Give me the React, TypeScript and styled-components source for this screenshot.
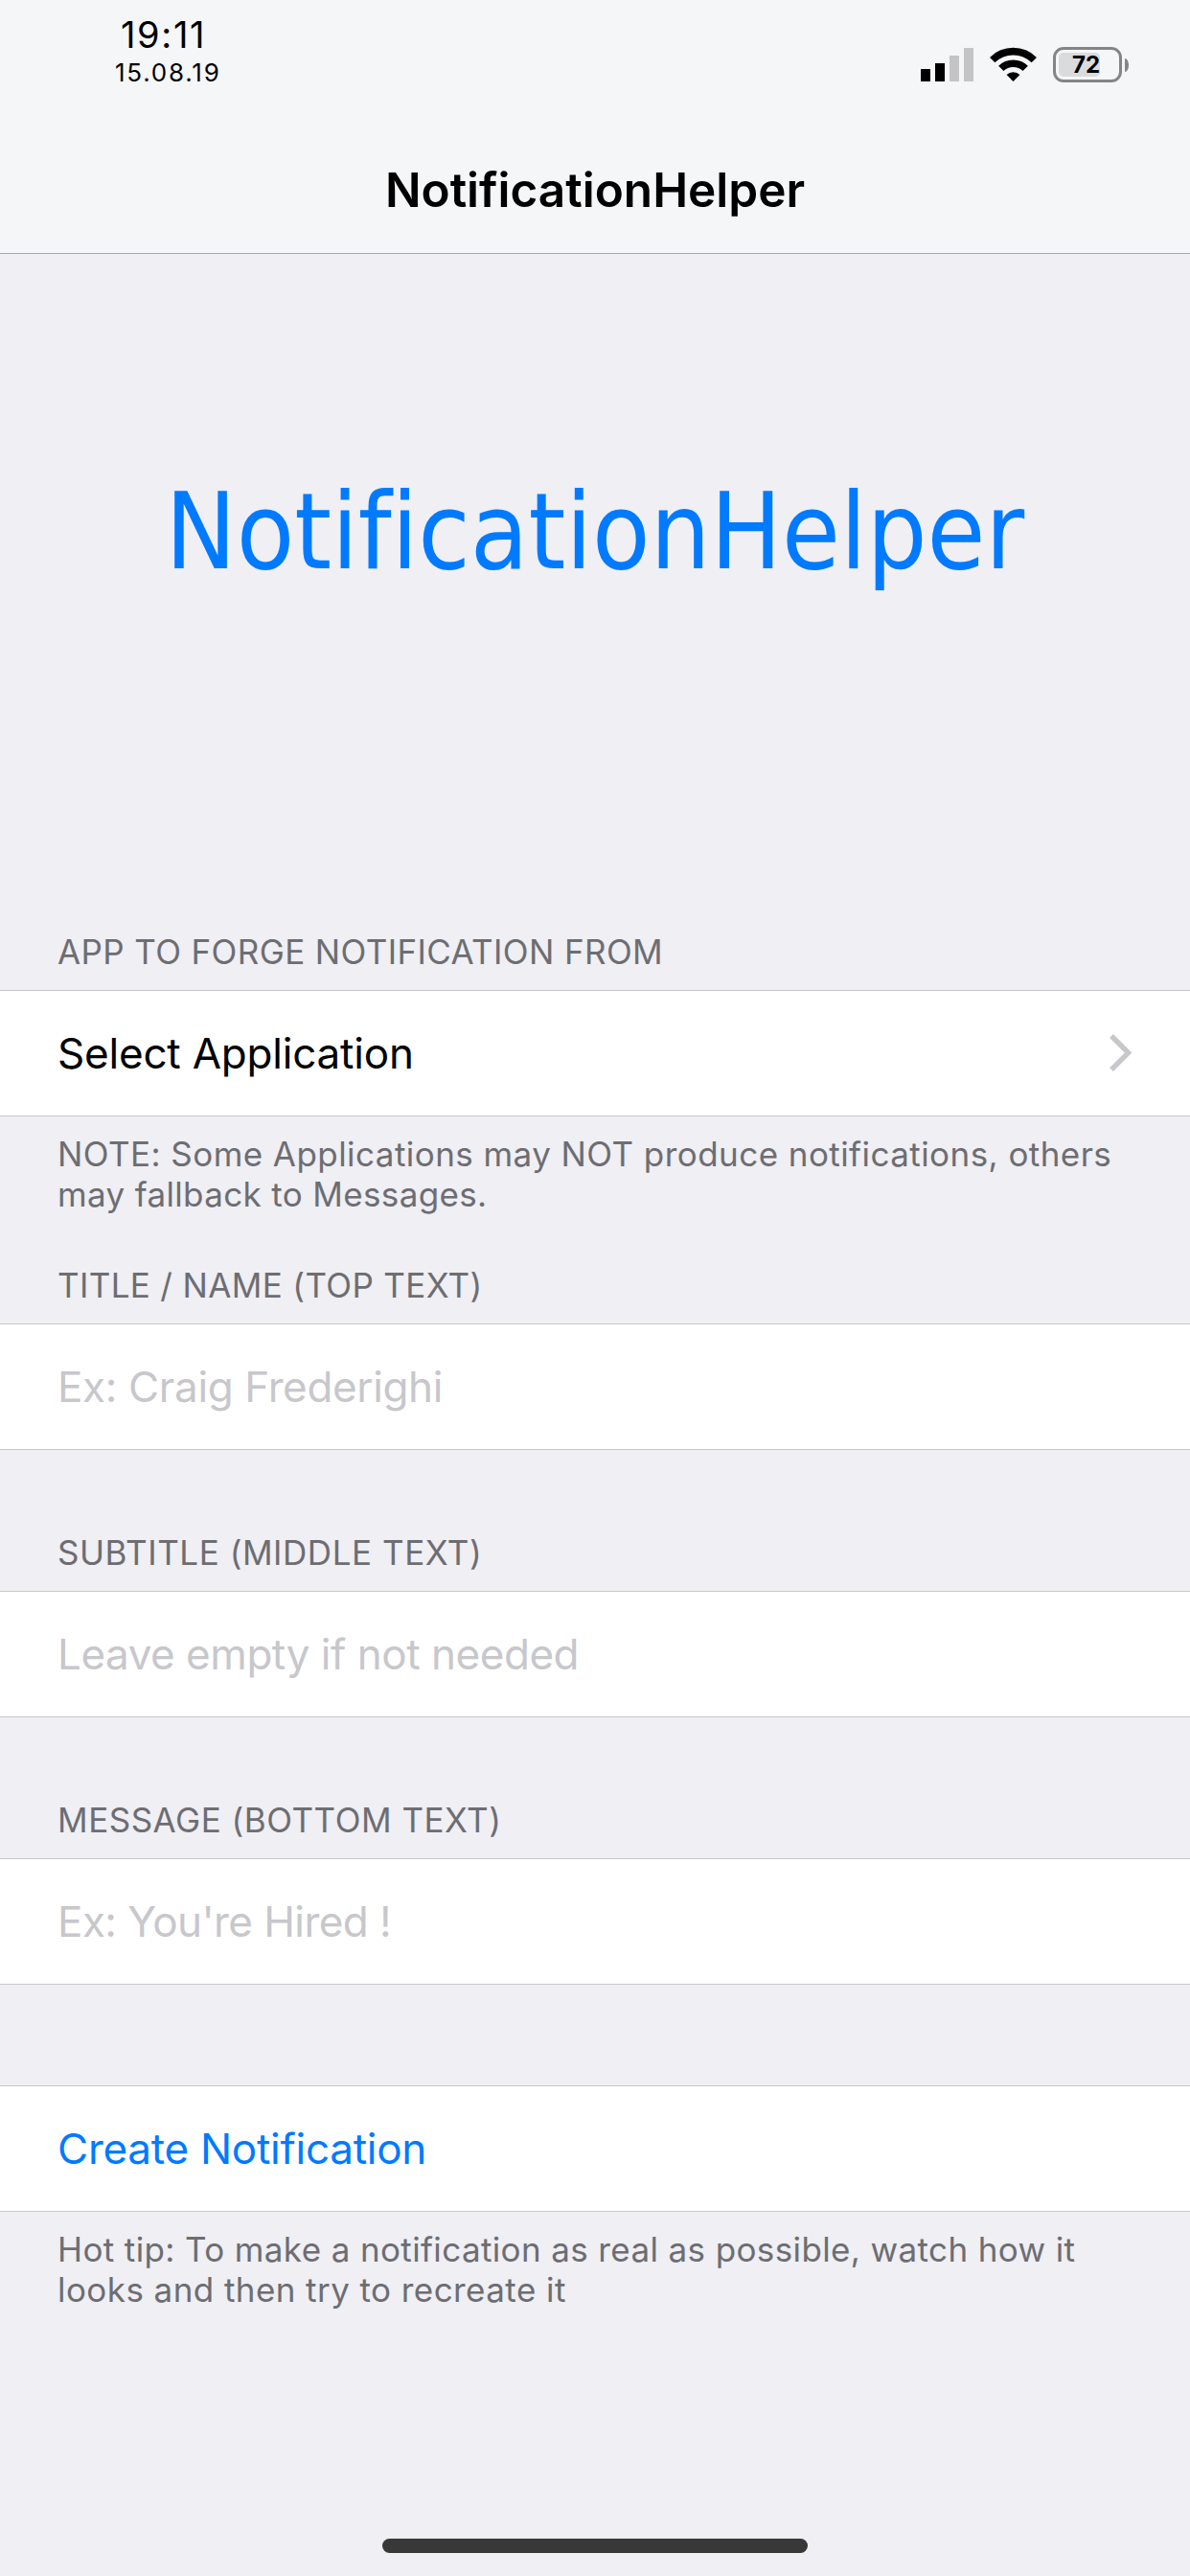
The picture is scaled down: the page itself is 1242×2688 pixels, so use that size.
import React from "react";
import styled, { createGlobalStyle } from "styled-components";

const colors = {
  bar: "#f5f6f8",
  page: "#efeff4",
  row: "#ffffff",
  line: "#c8c7cc",
  tint: "#007aff",
  caption: "#6d6d72",
  placeholder: "#c7c7cc",
};

const GlobalStyle = createGlobalStyle`
  *, *::before, *::after { box-sizing: border-box; }
  body {
    margin: 0;
    background: ${colors.page};
    font-family: Inter, "Liberation Sans", sans-serif;
    color: #000;
  }
`;

const Screen = styled.div`
  width: 1242px;
  height: 2688px;
  display: flex;
  flex-direction: column;
  background: ${colors.page};
  overflow: hidden;
`;

const TopBar = styled.header`
  flex: none;
  height: 265px;
  background: ${colors.bar};
  border-bottom: 1px solid #a7a7aa;
`;

const StatusBar = styled.div`
  height: 132px;
  display: flex;
  justify-content: space-between;
  padding: 16px 64px 0 120px;
`;

const Clock = styled.div`
  display: flex;
  flex-direction: column;
`;

const Time = styled.span`
  padding-left: 6px;
  font-size: 38px;
  line-height: 40px;
  letter-spacing: 1.65px;
`;

const DateText = styled.span`
  font-size: 26px;
  line-height: 39px;
  letter-spacing: 1.78px;
`;

const Indicators = styled.div`
  display: flex;
  align-items: flex-start;
  padding-top: 33px;
`;

const SignalIcon = styled.svg`
  width: 55px;
  height: 37px;
  margin-right: 17px;
`;

const WifiIcon = styled.svg`
  width: 49px;
  height: 37px;
  margin-right: 17px;
`;

const Battery = styled.div`
  display: flex;
  align-items: center;
`;

const BatteryBody = styled.div`
  width: 72px;
  height: 37px;
  padding: 3px;
  border: 3px solid #858587;
  border-radius: 11px;
`;

const BatteryLevel = styled.div`
  width: 43px;
  height: 25px;
  display: flex;
  align-items: center;
  justify-content: flex-end;
  border-radius: 5px;
  background: #dadbdc;
  font-size: 24px;
  font-weight: 700;
  line-height: 25px;
  white-space: nowrap;
`;

const BatteryTip = styled.div`
  width: 4px;
  height: 14px;
  margin-left: 3px;
  border-radius: 0 4px 4px 0 / 0 7px 7px 0;
  background: #858587;
`;

const NavTitle = styled.h1`
  margin: 0;
  height: 132px;
  line-height: 132px;
  text-align: center;
  font-size: 49.5px;
  font-weight: 600;
`;

const Hero = styled.div`
  flex: none;
  height: 580px;
  margin-bottom: 127px;
  display: flex;
  align-items: center;
  justify-content: center;
  font-family: "DejaVu Sans Condensed", "DejaVu Sans", sans-serif;
  font-stretch: condensed;
  font-size: 110px;
  line-height: 140px;
  letter-spacing: 0.1px;
  font-variant-ligatures: none;
  color: ${colors.tint};
`;

const Section = styled.section<{ $gap?: number }>`
  flex: none;
  margin-top: ${(p) => p.$gap ?? 0}px;
`;

const SectionHeader = styled.h2<{ $tracking: number }>`
  margin: 0;
  padding: 0 60px 19px;
  font-size: 35px;
  font-weight: 400;
  line-height: 42px;
  letter-spacing: ${(p) => p.$tracking}px;
  color: ${colors.caption};
`;

const Row = styled.div<{ $tracking: number; $color?: string }>`
  height: 132px;
  display: flex;
  align-items: center;
  justify-content: space-between;
  padding: 0 60px;
  border-top: 1px solid ${colors.line};
  border-bottom: 1px solid ${colors.line};
  background: ${colors.row};
  font-size: 44px;
  line-height: 54px;
  letter-spacing: ${(p) => p.$tracking}px;
  color: ${(p) => p.$color ?? "#000"};
`;

const Chevron = styled.svg`
  width: 24px;
  height: 40px;
`;

const Footnote = styled.p`
  margin: 0;
  padding: 18px 60px 0;
  font-size: 35px;
  line-height: 42px;
  color: ${colors.caption};
`;

const FootnoteLine = styled.span<{ $tracking: number }>`
  display: block;
  white-space: nowrap;
  letter-spacing: ${(p) => p.$tracking}px;
`;

const HomeIndicator = styled.div`
  flex: none;
  width: 444px;
  height: 15px;
  margin: auto auto 24px;
  border-radius: 8px;
  background: #383838;
`;

const fields = [
  { header: "TITLE / NAME (TOP TEXT)", headerTracking: 0.35, hint: "Ex: Craig Frederighi", hintTracking: -0.364, gap: 53 },
  { header: "SUBTITLE (MIDDLE TEXT)", headerTracking: 0.55, hint: "Leave empty if not needed", hintTracking: -0.466, gap: 86 },
  { header: "MESSAGE (BOTTOM TEXT)", headerTracking: 0.51, hint: "Ex: You're Hired !", hintTracking: -0.566, gap: 86 },
];

export default function App() {
  return (
    <>
      <GlobalStyle />
      <Screen>
        <TopBar>
          <StatusBar>
            <Clock>
              <Time>19:11</Time>
              <DateText>15.08.19</DateText>
            </Clock>
            <Indicators>
              <SignalIcon viewBox="0 0 55 37" aria-hidden="true">
                <rect x="0" y="23" width="10" height="13" fill="#000" />
                <rect x="15" y="17" width="10" height="19" fill="#000" />
                <rect x="30" y="9" width="10" height="27" fill="#c4c4c6" />
                <rect x="45" y="1" width="10" height="35" fill="#c4c4c6" />
              </SignalIcon>
              <WifiIcon viewBox="0 0 49 37" aria-hidden="true">
                <g fill="none" stroke="#000" strokeWidth="7.6">
                  <path d="M2.7 13.6A31 31 0 0 1 46.3 13.6" />
                  <path d="M11.8 22.4A18.2 18.2 0 0 1 37.2 22.4" />
                </g>
                <path d="M24.5 36L17.6 29.1A9.8 9.8 0 0 1 31.4 29.1Z" fill="#000" />
              </WifiIcon>
              <Battery>
                <BatteryBody>
                  <BatteryLevel>72</BatteryLevel>
                </BatteryBody>
                <BatteryTip />
              </Battery>
            </Indicators>
          </StatusBar>
          <NavTitle>NotificationHelper</NavTitle>
        </TopBar>

        <Hero>NotificationHelper</Hero>

        <Section>
          <SectionHeader $tracking={0.386}>APP TO FORGE NOTIFICATION FROM</SectionHeader>
          <Row $tracking={-0.203}>
            Select Application
            <Chevron viewBox="0 0 24 40" aria-hidden="true">
              <path d="M2 2L19.6 19.6L2 37.2" fill="none" stroke={colors.placeholder} strokeWidth="5.4" />
            </Chevron>
          </Row>
          <Footnote>
            <FootnoteLine $tracking={0.442}>NOTE: Some Applications may NOT produce notifications, others</FootnoteLine>
            <FootnoteLine $tracking={0.346}>may fallback to Messages.</FootnoteLine>
          </Footnote>
        </Section>

        {fields.map((f) => (
          <Section key={f.header} $gap={f.gap}>
            <SectionHeader $tracking={f.headerTracking}>{f.header}</SectionHeader>
            <Row $tracking={f.hintTracking} $color={colors.placeholder}>
              {f.hint}
            </Row>
          </Section>
        ))}

        <Section $gap={105}>
          <Row $tracking={-0.26} $color={colors.tint}>
            Create Notification
          </Row>
          <Footnote>
            <FootnoteLine $tracking={0.377}>Hot tip: To make a notification as real as possible, watch how it</FootnoteLine>
            <FootnoteLine $tracking={0.431}>looks and then try to recreate it</FootnoteLine>
          </Footnote>
        </Section>

        <HomeIndicator />
      </Screen>
    </>
  );
}
